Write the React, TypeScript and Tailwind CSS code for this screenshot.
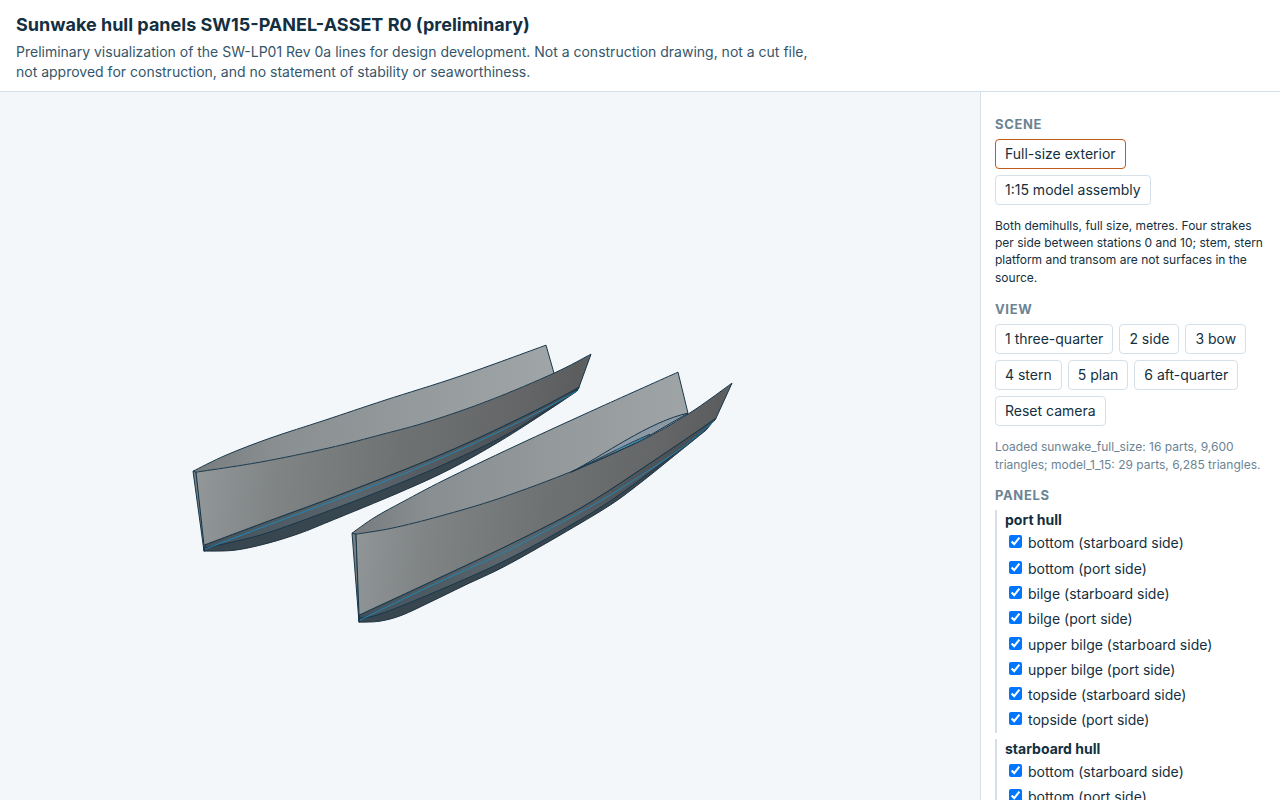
import { useState } from 'react';

const SCENES = ['Full-size exterior', '1:15 model assembly'];

const VIEWS = ['1 three-quarter', '2 side', '3 bow', '4 stern', '5 plan', '6 aft-quarter', 'Reset camera'];

const HULLS = ['port hull', 'starboard hull'];

const STRAKES = ['bottom', 'bilge', 'upper bilge', 'topside'];

const SIDES = ['starboard side', 'port side'];

type Point = [number, number];

type Hull = {
  farSheer: Point[];
  nearSheer: Point[];
  chine: Point[];
  waterline: Point[];
  bilge: Point[];
  keel: Point[];
  transom: Point[];
};

const PORT: Hull = {
  farSheer: [[193, 471], [226, 455], [270, 438], [325, 420], [385, 400], [460, 376], [546, 345]],
  nearSheer: [[196, 472], [260, 462], [328, 448], [383, 434], [430, 421], [490, 400], [554, 373], [591, 354]],
  chine: [[204, 545], [260, 524], [320, 502], [380, 479], [430, 459], [480, 437], [540, 408], [579, 387]],
  waterline: [[205, 549], [260, 528], [335, 500], [400, 475], [450, 454], [500, 431], [540, 411], [577, 391]],
  bilge: [[204, 548], [260, 535], [320, 514], [380, 491], [440, 466], [500, 438], [540, 414], [579, 388]],
  keel: [[204, 551], [235, 550], [268, 543], [300, 533], [330, 521], [400, 492], [450, 469], [500, 441], [547, 411], [577, 391]],
  transom: [[193, 471], [196, 472], [205, 545], [204, 551]],
};

const STARBOARD: Hull = {
  farSheer: [[352, 533], [375, 517], [404, 501], [444, 480], [515, 446], [600, 407], [678, 372]],
  nearSheer: [[356, 534], [392, 528], [440, 516], [500, 498], [575, 470], [640, 441], [688, 414], [732, 383]],
  chine: [[359, 615], [430, 582], [500, 549], [560, 519], [600, 496], [653, 461], [690, 436], [716, 418]],
  waterline: [[360, 620], [430, 586], [500, 554], [560, 523], [610, 495], [670, 456], [694, 438], [714, 421]],
  bilge: [[359, 618], [380, 614], [430, 594], [500, 563], [560, 531], [610, 501], [670, 457], [714, 421]],
  keel: [[359, 622], [380, 621], [402, 615], [430, 602], [465, 585], [505, 566], [560, 535], [610, 505], [640, 483], [670, 459], [706, 430]],
  transom: [[352, 533], [356, 534], [359, 615], [359, 622]],
};

// Catmull-Rom segments through the points, written as cubic beziers
function through(points: Point[]) {
  let d = '';
  for (let i = 0; i < points.length - 1; i++) {
    const a = points[i - 1] ?? points[i];
    const b = points[i];
    const c = points[i + 1];
    const e = points[i + 2] ?? c;
    d += `C${b[0] + (c[0] - a[0]) / 6} ${b[1] + (c[1] - a[1]) / 6} ${c[0] - (e[0] - b[0]) / 6} ${c[1] - (e[1] - b[1]) / 6} ${c[0]} ${c[1]}`;
  }
  return d;
}

const line = (points: Point[]) => `M${points[0].join(' ')}${through(points)}`;

function band(upper: Point[], lower: Point[]) {
  const back = [...lower].reverse();
  return `${line(upper)}L${back[0].join(' ')}${through(back)}Z`;
}

function SectionHeading({ children }: { children: string }) {
  return (
    <h2 className="mt-3 mb-[5px] text-[13px] leading-5 font-bold uppercase tracking-wider text-[#6b8494]">{children}</h2>
  );
}

function ToolButton({ label, active, onClick }: { label: string; active?: boolean; onClick?: () => void }) {
  return (
    <button
      type="button"
      onClick={onClick}
      className={`h-[30px] rounded border bg-white px-[9px] text-sm text-[#132f40] ${
        active ? 'border-[#c05a1c]' : 'border-[#d5e0e8]'
      }`}
    >
      {label}
    </button>
  );
}

function HullPanels({ hull }: { hull: string }) {
  return (
    <fieldset className="mb-1.5 border-l-2 border-[#d5e0e8] pl-2">
      <legend className="float-left w-full font-bold">{hull}</legend>
      <div className="clear-both">
        {STRAKES.flatMap((strake) =>
          SIDES.map((side) => (
            <label key={`${strake} ${side}`} className="block pt-[3px] pb-0.5">
              <input type="checkbox" defaultChecked className="mr-1.5 ml-1 size-[13px]" />
              {strake} ({side})
            </label>
          )),
        )}
      </div>
    </fieldset>
  );
}

function HullShape({ hull, farEnd, x1, x2 }: { hull: Hull; farEnd: Point; x1: number; x2: number }) {
  const id = `hull-${x1}`;
  return (
    <g strokeLinejoin="round">
      <defs>
        <linearGradient id={`${id}-near`} gradientUnits="userSpaceOnUse" x1={x1} y1="500" x2={x2} y2="540">
          <stop offset="0" stopColor="#929799" />
          <stop offset="0.2" stopColor="#808485" />
          <stop offset="0.5" stopColor="#6f7273" />
          <stop offset="0.8" stopColor="#636567" />
          <stop offset="0.93" stopColor="#5b5d5f" />
          <stop offset="1" stopColor="#696c6e" />
        </linearGradient>
        <linearGradient id={`${id}-far`} gradientUnits="userSpaceOnUse" x1={x1} y1="450" x2={x2} y2="450">
          <stop offset="0" stopColor="#777b7d" />
          <stop offset="0.2" stopColor="#898e90" />
          <stop offset="0.6" stopColor="#969b9e" />
          <stop offset="1" stopColor="#a3a8ab" />
        </linearGradient>
        <linearGradient id={`${id}-bilge`} gradientUnits="userSpaceOnUse" x1={x1} y1="500" x2={x2} y2="500">
          <stop offset="0" stopColor="#40505a" />
          <stop offset="0.4" stopColor="#5b656c" />
          <stop offset="1" stopColor="#464a4d" />
        </linearGradient>
      </defs>
      <path d={band(hull.farSheer, hull.nearSheer.slice(0, -1))} fill={`url(#${id}-far)`} />
      <path d={`${line(hull.farSheer)}L${farEnd.join(' ')}`} fill="none" stroke="#17364a" />
      <path d={band(hull.chine, hull.keel)} fill="#37464f" stroke="#22343f" />
      <path d={band(hull.chine, hull.bilge)} fill={`url(#${id}-bilge)`} stroke="#17364a" />
      <path d={`M${hull.transom.map((p) => p.join(' ')).join('L')}Z`} fill="#7a7e80" stroke="#17364a" />
      <path d={band(hull.nearSheer, hull.chine)} fill={`url(#${id}-near)`} stroke="#17364a" />
      <path d={line(hull.waterline)} fill="none" stroke="#1f86b4" />
    </g>
  );
}

function HullScene() {
  return (
    <svg viewBox="0 92 980 708" className="block h-full w-full" role="img" aria-label="Both demihulls, three-quarter view">
      <HullShape hull={PORT} farEnd={[554, 373]} x1={193} x2={591} />
      <HullShape hull={STARBOARD} farEnd={[688, 413]} x1={352} x2={732} />
      <path d="M571 472C602 456 650 421 688 413L640 441Z" fill="#8b99a5" stroke="#17364a" strokeLinejoin="round" />
      <path d="M571 472C600 458 625 445 650 434" fill="none" stroke="#17364a" />
      <path d="M616 450L646 437" fill="none" stroke="#217ca3" />
    </svg>
  );
}

export default function App() {
  const [scene, setScene] = useState(SCENES[0]);

  return (
    <div className="flex h-screen flex-col bg-white font-[Inter,sans-serif] text-sm leading-[1.45] text-[#132f40]">
      <header className="border-b border-[#d5e0e8] px-4 pt-3 pb-2">
        <h1 className="mb-1 text-lg leading-[1.45] font-bold">Sunwake hull panels SW15-PANEL-ASSET R0 (preliminary)</h1>
        <p className="max-w-[800px] text-[#35566a]">
          Preliminary visualization of the SW-LP01 Rev 0a lines for design development. Not a construction drawing, not a
          cut file, not approved for construction, and no statement of stability or seaworthiness.
        </p>
      </header>
      <div className="flex min-h-0 flex-1">
        <main className="min-w-0 flex-1 bg-[#f3f7fa]">
          <HullScene />
        </main>
        <aside className="w-[300px] shrink-0 overflow-y-auto border-l border-[#d5e0e8] px-3.5 pt-2.5 [scrollbar-width:none]">
          <SectionHeading>Scene</SectionHeading>
          <div className="flex flex-wrap gap-1.5">
            {SCENES.map((name) => (
              <ToolButton key={name} label={name} active={name === scene} onClick={() => setScene(name)} />
            ))}
          </div>
          <p className="mt-3 mb-[13px] text-xs leading-[1.45]">
            Both demihulls, full size, metres. Four strakes per side between stations 0 and 10; stem, stern platform and
            transom are not surfaces in the source.
          </p>
          <SectionHeading>View</SectionHeading>
          <div className="flex flex-wrap gap-1.5">
            {VIEWS.map((name) => (
              <ToolButton key={name} label={name} />
            ))}
          </div>
          <p className="my-3 text-xs leading-[1.45] text-[#6b8494]">
            Loaded sunwake_full_size: 16 parts, 9,600 triangles; model_1_15: 29 parts, 6,285 triangles.
          </p>
          <SectionHeading>Panels</SectionHeading>
          {HULLS.map((hull) => (
            <HullPanels key={hull} hull={hull} />
          ))}
        </aside>
      </div>
    </div>
  );
}
